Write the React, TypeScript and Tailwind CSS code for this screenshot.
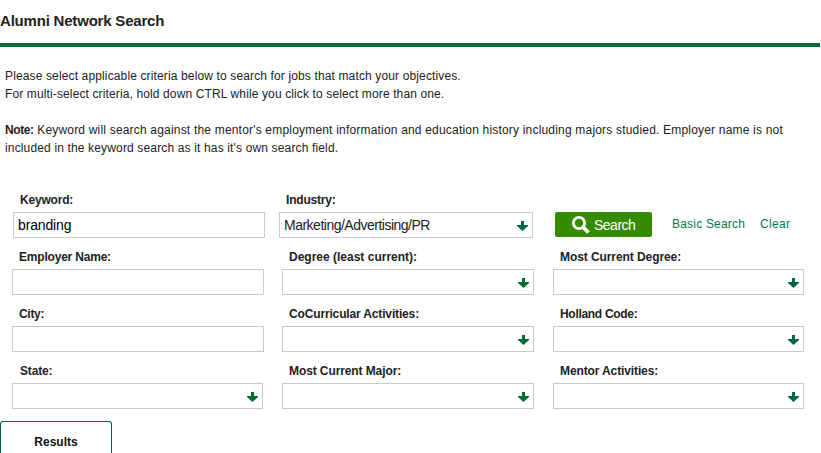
import React from "react";

function DownArrow() {
  return (
    <svg width="11" height="10" viewBox="0 0 11 10" className="mt-px shrink-0" fill="#006b3a">
      <path d="M4 0h3v4h4v1L5.5 10 0 5V4h4z" />
    </svg>
  );
}

type FieldProps = {
  label: string;
  value?: string;
  select?: boolean;
  cell: string;
  labelClass: string;
  valueClass?: string;
};

function Field({ label, value, select, cell, labelClass, valueClass = "" }: FieldProps) {
  return (
    <div className={`shrink-0 ${cell}`}>
      <div className={`h-5 whitespace-nowrap text-[12px] leading-4 font-bold ${labelClass}`}>{label}</div>
      <div className="flex h-[26px] items-center justify-between border border-[#cacaca] pr-1 pl-1">
        <span className={`whitespace-nowrap text-[14px] leading-4 ${valueClass}`}>{value}</span>
        {select && <DownArrow />}
      </div>
    </div>
  );
}

export default function App() {
  return (
    <div className="h-[453px] w-[821px] overflow-hidden bg-white font-['Liberation_Sans',Arial,sans-serif] text-[#222]">
      <h1 className="flex h-[43px] items-center text-[15px] font-bold whitespace-nowrap tracking-[-0.2px]">
        Alumni Network Search
      </h1>
      <div className="h-1 w-[820px] bg-[#006b3a]" />

      <div className="h-[145px] pt-5 pl-[5px] text-[12px] leading-[18px] whitespace-nowrap">
        <p className="tracking-[0.135px]">Please select applicable criteria below to search for jobs that match your objectives.</p>
        <p className="tracking-[0.125px]">For multi-select criteria, hold down CTRL while you click to select more than one.</p>
        <p className="mt-[18px] tracking-[0.19px]">
          <b className="tracking-[-0.4px]">Note:</b> Keyword will search against the mentor's employment information and education history including majors studied. Employer name is not
        </p>
        <p className="tracking-[0.15px]">included in the keyword search as it has it's own search field.</p>
      </div>

      <form className="flex flex-col gap-[11px]">
        <div className="flex h-[46px]">
          <Field label="Keyword:" value="branding" cell="ml-[13px] w-[252px]" labelClass="pl-[7px] tracking-[-0.2px]" valueClass="text-black tracking-[-0.15px]" />
          <Field label="Industry:" value="Marketing/Advertising/PR" select cell="ml-[14px] w-[254px]" labelClass="pl-[7px] tracking-[-0.2px]" valueClass="tracking-[-0.5px]" />
          <div className="mb-px ml-[22px] flex h-[25px] items-center self-end">
            <button type="button" className="flex h-[25px] w-[97px] items-center rounded-[2px] bg-[#368c00] pl-[17px] text-[14px] text-white">
              <svg width="18" height="18" viewBox="0 0 18 18" fill="none" stroke="#fff" className="mt-px">
                <circle cx="7" cy="7" r="5.6" strokeWidth="2.8" />
                <path d="M11 11l5.5 5.5" strokeWidth="3.8" />
              </svg>
              <span className="mt-px ml-1 tracking-[-0.5px]">Search</span>
            </button>
            <a className="ml-5 w-[73px] pb-0.5 text-[12px] whitespace-nowrap text-[#007a4b] tracking-[0.2px]">Basic Search</a>
            <a className="ml-[15px] pb-0.5 text-[12px] whitespace-nowrap text-[#007a4b] tracking-[0.3px]">Clear</a>
          </div>
        </div>
        <div className="flex h-[46px]">
          <Field label="Employer Name:" cell="ml-3 w-[252px]" labelClass="pl-[7px] tracking-[-0.2px]" />
          <Field label="Degree (least current):" select cell="ml-[18px] w-[252px]" labelClass="pl-[7px]" />
          <Field label="Most Current Degree:" select cell="ml-[19px] w-[251px]" labelClass="pl-[7px] tracking-[-0.08px]" />
        </div>
        <div className="flex h-[46px]">
          <Field label="City:" cell="ml-3 w-[252px]" labelClass="pl-[7px] tracking-[-0.3px]" />
          <Field label="CoCurricular Activities:" select cell="ml-[18px] w-[252px]" labelClass="pl-[7px] tracking-[-0.15px]" />
          <Field label="Holland Code:" select cell="ml-[19px] w-[251px]" labelClass="pl-[7px] tracking-[-0.3px]" />
        </div>
        <div className="flex h-[46px]">
          <Field label="State:" select cell="ml-3 w-[251px]" labelClass="pl-2 tracking-[-0.15px]" />
          <Field label="Most Current Major:" select cell="ml-[19px] w-[252px]" labelClass="pl-[7px] tracking-[-0.1px]" />
          <Field label="Mentor Activities:" select cell="ml-[19px] w-[251px]" labelClass="pl-[7px] tracking-[-0.12px]" />
        </div>
      </form>

      <div className="mt-3 flex h-10 w-28 justify-center rounded-t-[3px] border border-b-0 border-[#006b3a] pt-3 text-[12px] leading-4 font-bold text-[#111]">
        Results
      </div>
    </div>
  );
}
